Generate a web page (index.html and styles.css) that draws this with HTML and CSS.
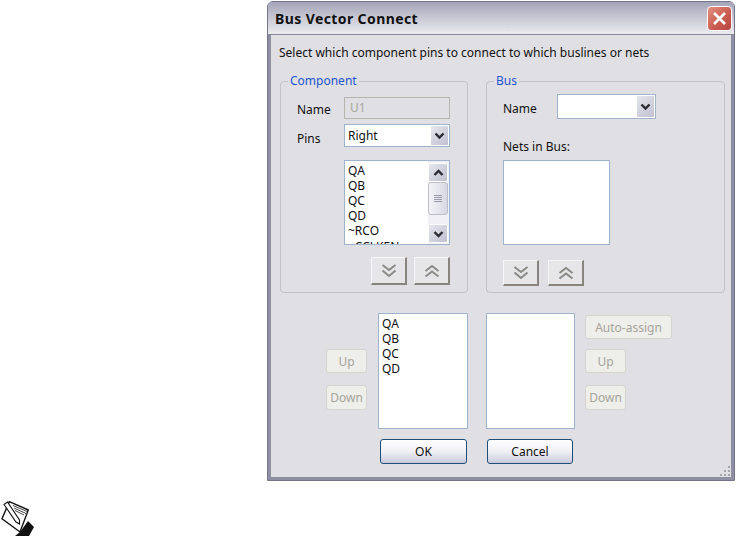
FILE: index.html
```html
<!DOCTYPE html>
<html lang="en">
<head>
<meta charset="UTF-8">
<title>Bus Vector Connect</title>
<link rel="stylesheet" href="styles.css">
</head>
<body>

<div class="dialog">
  <div class="titlebar">
    <span class="title">Bus Vector Connect</span>
    <div class="close">
      <svg width="15" height="15" viewBox="0 0 15 15"><path d="M2 2 L13 13 M13 2 L2 13" stroke="#fff" stroke-width="2.6" fill="none"/></svg>
    </div>
  </div>

  <div class="client">
    <p class="intro">Select which component pins to connect to which buslines or nets</p>

    <div class="panels">
      <div class="group group-component">
        <span class="legend">Component</span>
        <div class="component-grid">
          <span class="label">Name</span>
          <div class="field field-disabled">U1</div>
          <span class="label label-pins">Pins</span>
          <div class="combo combo-pins">
            <span class="combo-text">Right</span>
            <div class="combo-btn">
              <svg width="11" height="8" viewBox="0 0 11 8"><path d="M1.5 1.5 L5.5 5.5 L9.5 1.5" stroke="#2b2b33" stroke-width="2.4" fill="none"/></svg>
            </div>
          </div>
          <div class="listbox pin-list">
            <div class="list-items">
              <div>QA</div>
              <div>QB</div>
              <div>QC</div>
              <div>QD</div>
              <div>~RCO</div>
              <div class="list-clipped">~CCLKEN</div>
            </div>
            <div class="scrollbar">
              <div class="scroll-btn">
                <svg width="11" height="8" viewBox="0 0 11 8"><path d="M1.5 6 L5.5 2 L9.5 6" stroke="#2b2b33" stroke-width="2.4" fill="none"/></svg>
              </div>
              <div class="scroll-thumb">
                <svg width="8" height="8" viewBox="0 0 8 8"><path d="M0 .5 H8 M0 2.5 H8 M0 4.5 H8 M0 6.5 H8" stroke="#9a9aa8" stroke-width="1"/></svg>
              </div>
              <div class="scroll-btn scroll-btn-down">
                <svg width="11" height="8" viewBox="0 0 11 8"><path d="M1.5 2 L5.5 6 L9.5 2" stroke="#2b2b33" stroke-width="2.4" fill="none"/></svg>
              </div>
            </div>
          </div>
          <div class="move-btns move-btns-right">
            <button class="move-btn">
              <svg width="16" height="14" viewBox="0 0 16 14"><path d="M1.5 1 L8 6 L14.5 1 M1.5 6.5 L8 12 L14.5 6.5" stroke="#8a8a86" stroke-width="2" fill="none"/></svg>
            </button>
            <button class="move-btn">
              <svg width="16" height="14" viewBox="0 0 16 14"><path d="M1.5 7 L8 2 L14.5 7 M1.5 12.5 L8 7.5 L14.5 12.5" stroke="#8a8a86" stroke-width="2" fill="none"/></svg>
            </button>
          </div>
        </div>
      </div>

      <div class="group group-bus">
        <span class="legend">Bus</span>
        <div class="bus-name">
          <span class="label label-bus">Name</span>
          <div class="combo combo-bus">
            <span class="combo-text"></span>
            <div class="combo-btn">
              <svg width="11" height="8" viewBox="0 0 11 8"><path d="M1.5 1.5 L5.5 5.5 L9.5 1.5" stroke="#2b2b33" stroke-width="2.4" fill="none"/></svg>
            </div>
          </div>
        </div>
        <div class="nets-label">Nets in Bus:</div>
        <div class="listbox net-list"></div>
        <div class="move-btns move-btns-bus">
          <button class="move-btn">
            <svg width="16" height="14" viewBox="0 0 16 14"><path d="M1.5 1 L8 6 L14.5 1 M1.5 6.5 L8 12 L14.5 6.5" stroke="#8a8a86" stroke-width="2" fill="none"/></svg>
          </button>
          <button class="move-btn">
            <svg width="16" height="14" viewBox="0 0 16 14"><path d="M1.5 7 L8 2 L14.5 7 M1.5 12.5 L8 7.5 L14.5 12.5" stroke="#8a8a86" stroke-width="2" fill="none"/></svg>
          </button>
        </div>
      </div>
    </div>

    <div class="assign">
      <div class="side side-left">
        <button class="btn-disabled">Up</button>
        <button class="btn-disabled btn-down">Down</button>
      </div>
      <div class="listbox assign-list">
        <div class="list-items">
          <div>QA</div>
          <div>QB</div>
          <div>QC</div>
          <div>QD</div>
        </div>
      </div>
      <div class="listbox assign-list"></div>
      <div class="side side-right">
        <button class="btn-disabled btn-auto">Auto-assign</button>
        <button class="btn-disabled btn-narrow">Up</button>
        <button class="btn-disabled btn-narrow btn-down">Down</button>
      </div>
      <button class="btn-primary btn-ok">OK</button>
      <button class="btn-primary btn-cancel">Cancel</button>
    </div>

    <svg class="grip" width="12" height="12" viewBox="0 0 12 12">
      <path d="M9 1h2v2H9z M5 5h2v2H5z M9 5h2v2H9z M1 9h2v2H1z M5 9h2v2H5z M9 9h2v2H9z" fill="#a5a5ac"/>
    </svg>
  </div>
</div>

<svg class="note-icon" width="34" height="36" viewBox="0 0 34 36">
  <path d="M27 21 L33 27 L28 36 H14 L19 32 Z" fill="#111"/>
  <path d="M8.3 1.7 L27.3 10 L19 32 L1 18.7 Z" fill="#fff" stroke="#111" stroke-width="1.4"/>
  <path d="M12 5.5 L26 11.5 M13 8 L25 13.5 M14 10.5 L23 15" stroke="#444" stroke-width="1" fill="none"/>
  <path d="M3 4.5 L6.5 2 L18.5 20 L18.5 24 L15 22 Z" fill="#fff" stroke="#111" stroke-width="1.1"/>
</svg>

</body>
</html>
```

FILE: styles.css
```css
body {
  margin: 0;
  background-color: #fff;
  font-family: "Noto Sans", sans-serif;
  font-size: 12px;
  color: #111;
}
p {
  margin: 0;
}
button {
  font-family: inherit;
  font-size: 12px;
  padding: 0;
  box-sizing: border-box;
}
.dialog {
  margin: 1px 0 0 267px;
  width: 468px;
  height: 480px;
  box-sizing: border-box;
  display: flex;
  flex-direction: column;
  border: 1px solid #75758a;
  border-radius: 6px 6px 0 0;
  background-color: #e0dfe3;
}
.titlebar {
  height: 32px;
  flex: none;
  display: flex;
  align-items: center;
  justify-content: space-between;
  padding: 0 2px 0 7px;
  border-radius: 5px 5px 0 0;
  border-bottom: 1px solid #87879b;
  background: linear-gradient(#a4a4b8, #c5c5d2 45%, #ebebef);
}
.title {
  font-size: 14px;
  font-weight: bold;
  letter-spacing: 0.4px;
}
.close {
  width: 25px;
  height: 25px;
  box-sizing: border-box;
  display: flex;
  align-items: center;
  justify-content: center;
  border: 1px solid #fff;
  border-radius: 4px;
  background: linear-gradient(135deg, #e2917f, #cb5d52 55%, #b4463f);
}
.client {
  flex: 1;
  position: relative;
  box-sizing: border-box;
  border-left: 3px solid #8f8fa3;
  border-right: 3px solid #8f8fa3;
  border-bottom: 3px solid #8f8fa3;
  padding: 10px 0 0 9px;
}
.intro {
  line-height: 16px;
  margin-left: -1px;
}
.panels {
  display: flex;
  gap: 18px;
  margin-top: 20px;
}
.group {
  position: relative;
  box-sizing: border-box;
  height: 212px;
  border: 1px solid #c4c1c4;
  border-radius: 4px;
}
.group-component {
  width: 188px;
  padding: 15px 0 0 16px;
}
.group-bus {
  width: 239px;
  padding: 12px 0 0 16px;
}
.legend {
  position: absolute;
  top: -9px;
  left: 7px;
  padding: 0 2px;
  background-color: #e0dfe3;
  color: #1c56d0;
  line-height: 16px;
}
.component-grid {
  display: grid;
  grid-template-columns: 47px 106px;
  row-gap: 5px;
  align-items: center;
}
.label {
  padding-top: 2px;
}
.label-pins {
  padding-top: 5px;
}
.label-bus {
  padding-top: 4px;
}
.field {
  box-sizing: border-box;
  height: 22px;
  line-height: 20px;
  padding-left: 5px;
  border: 1px solid #b6b5b0;
}
.field-disabled {
  background-color: #e0dfe3;
  color: #a8a89e;
}
.combo {
  box-sizing: border-box;
  display: flex;
  justify-content: space-between;
  border: 1px solid #9db4cc;
  background-color: #fff;
}
.combo-pins {
  height: 23px;
}
.combo-bus {
  width: 99px;
  height: 25px;
}
.combo-text {
  line-height: 21px;
  padding-left: 3px;
}
.combo-btn,
.scroll-btn {
  display: flex;
  align-items: center;
  justify-content: center;
  box-sizing: border-box;
  border: 1px solid #fff;
  border-radius: 2px;
  background: linear-gradient(135deg, #e6e6ee, #c0c0d0);
}
.combo-btn {
  width: 19px;
}
.listbox {
  box-sizing: border-box;
  display: flex;
  justify-content: space-between;
  overflow: hidden;
  border: 1px solid #9db4cc;
  background-color: #fff;
}
.pin-list {
  grid-column: 2;
  height: 85px;
  margin-top: 8px;
}
.list-items {
  padding: 2px 0 0 3px;
  line-height: 15px;
}
.list-clipped {
  padding-top: 1px;
}
.scrollbar {
  width: 21px;
  flex: none;
  display: flex;
  flex-direction: column;
  padding: 2px 1px 1px 0;
  box-sizing: border-box;
  background-color: #f1f1f5;
}
.scroll-btn {
  height: 19px;
  flex: none;
}
.scroll-btn-down {
  margin-top: auto;
}
.scroll-thumb {
  height: 33px;
  box-sizing: border-box;
  display: flex;
  align-items: center;
  justify-content: center;
  border: 1px solid #bdbdc9;
  border-radius: 3px;
  background: linear-gradient(90deg, #f3f3f8, #d8d8e3);
}
.move-btns {
  display: flex;
}
.move-btns-right {
  grid-column: 1 / 3;
  justify-content: flex-end;
  gap: 7px;
  margin-top: 7px;
}
.move-btn {
  width: 36px;
  height: 28px;
  display: flex;
  align-items: center;
  justify-content: center;
  background-color: #e6e5e8;
  border: 1px solid;
  border-color: #f6f6f6 #87857e #87857e #f6f6f6;
  border-width: 1px 2px 2px 1px;
}
.bus-name {
  display: grid;
  grid-template-columns: 54px 99px;
  align-items: center;
}
.nets-label {
  margin-top: 20px;
  line-height: 16px;
}
.net-list {
  width: 107px;
  height: 85px;
  margin-top: 5px;
}
.move-btns-bus {
  gap: 9px;
  margin-top: 15px;
}
.move-btns-bus .move-btn {
  height: 26px;
}
.assign {
  display: grid;
  grid-template-columns: 41px 90px 89px 87px;
  grid-template-rows: 116px 25px;
  column-gap: 11px;
  row-gap: 10px;
  margin: 20px 0 0 46px;
}
.assign-list {
  height: 116px;
}
.assign-list + .assign-list {
  margin-left: 7px;
  width: 89px;
}
.side {
  display: flex;
  flex-direction: column;
  align-items: flex-start;
}
.side-left {
  padding-top: 36px;
}
.side-right {
  padding-top: 2px;
  margin-left: 6px;
}
.btn-disabled {
  width: 41px;
  height: 24px;
  border: 1px solid #d5d4cd;
  border-radius: 3px;
  background-color: #eeeeea;
  color: #a5a59b;
}
.btn-down {
  height: 25px;
  margin-top: 12px;
}
.btn-auto {
  width: 87px;
  flex: none;
}
.btn-narrow {
  margin-top: 10px;
}
.btn-narrow.btn-down {
  margin-top: 12px;
}
.btn-primary {
  height: 25px;
  border: 1px solid #1f4f79;
  border-radius: 3px;
  background: linear-gradient(#fff, #f0f0f5 50%, #c9c9dd);
  color: #111;
}
.btn-ok {
  grid-column: 2;
  width: 87px;
  margin-left: 2px;
}
.btn-cancel {
  grid-column: 3;
  width: 86px;
  margin-left: 8px;
}
.grip {
  position: absolute;
  right: 0;
  bottom: 0;
}
.note-icon {
  display: block;
  margin: 19px 0 0 1px;
}
```
